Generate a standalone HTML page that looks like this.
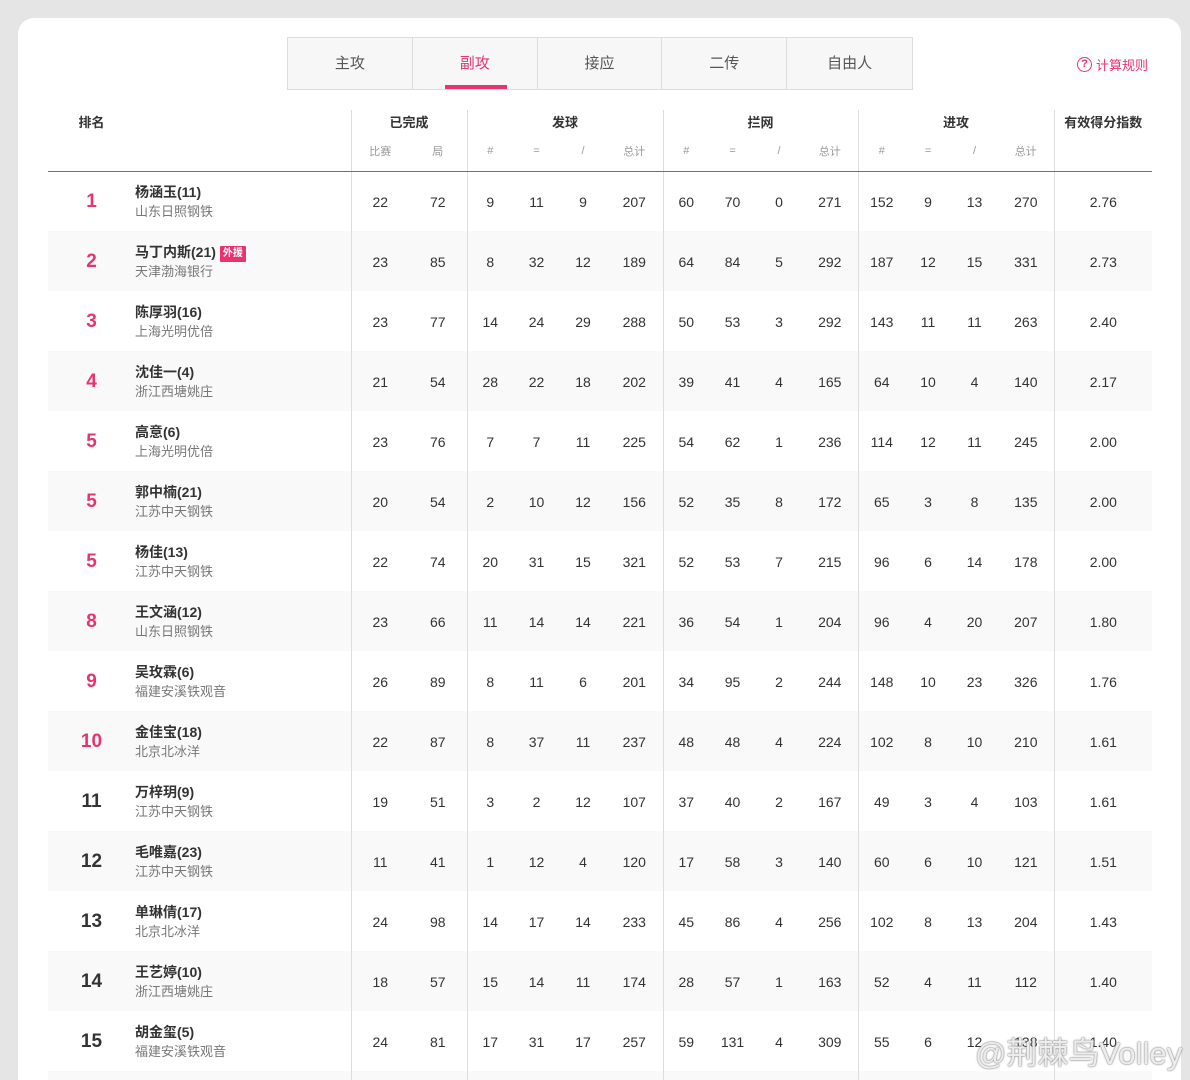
<!DOCTYPE html>
<html><head><meta charset="utf-8">
<style>
*{margin:0;padding:0;box-sizing:border-box}
html,body{width:1190px;height:1080px;overflow:hidden}
body{background:#e5e5e5;font-family:"Liberation Sans","Noto Sans CJK SC",sans-serif;color:#333;position:relative}
.card{position:absolute;left:18px;top:18px;width:1163px;height:1062px;background:#fff;border-radius:16px 16px 0 0}
.tabs{position:absolute;left:287px;top:37px;width:626px;height:53px;border:1px solid #ddd;background:#f7f7f7;display:flex}
.tab{width:125px;height:51px;line-height:52px;text-align:center;font-size:15px;color:#555;border-right:1px solid #ddd;position:relative}
.tab:last-child{border-right:none}
.tab.on{color:#e8336f;background:#f7f7f7}
.tab.on:after{content:"";position:absolute;left:32px;width:62px;bottom:0;height:4px;background:#e8336f}
.rule{position:absolute;left:1077px;top:55px;font-size:13px;color:#e8336f;display:flex;align-items:center}
.rule i{display:inline-block;width:15px;height:15px;border:1.5px solid #e8336f;border-radius:50%;font-style:normal;font-size:11px;line-height:12px;text-align:center;margin-right:4px;font-weight:bold}
table{position:absolute;left:48px;top:110px;border-collapse:collapse;table-layout:fixed;width:1104px}
td,th{text-align:center;font-size:14px;padding:0;white-space:nowrap}
th{font-weight:bold;font-size:13px;color:#333}
tr.g th{height:22px}
tr.s th{height:39px;font-weight:normal;font-size:11px;color:#999;border-bottom:1px solid #e8336f}
.bl{border-left:1px solid #ddd}
tbody tr{height:60px}
tbody td{padding-top:2px}
tbody tr:nth-child(even){background:#f9f9f9}
td.rk{font-size:19px;font-weight:bold;color:#e8336f}
td.rk.d{color:#333}
td.nm{text-align:left}
.n{font-weight:bold;font-size:14px;color:#333;display:block;line-height:20px}
.t{font-size:13px;color:#777;display:block;line-height:20px}
.wy{display:inline-block;background:#e8336f;color:#fff;font-size:10px;padding:0 3px;line-height:16px;margin-left:4px;vertical-align:1px;border-radius:1px}
.wm{position:absolute;left:975px;top:1028px;font-size:31px;color:rgba(255,255,255,.85);text-shadow:0 0 2px #888,0 0 1px #666}
</style></head><body>
<div class="card"></div>
<div class="tabs"><div class="tab">主攻</div><div class="tab on">副攻</div><div class="tab">接应</div><div class="tab">二传</div><div class="tab">自由人</div></div>
<div class="rule"><i>?</i>计算规则</div>
<table>
<colgroup><col style="width:87px"><col style="width:216px"><col style="width:58px"><col style="width:58px"><col style="width:46px"><col style="width:47px"><col style="width:46px"><col style="width:57px"><col style="width:46px"><col style="width:47px"><col style="width:46px"><col style="width:56px"><col style="width:47px"><col style="width:46px"><col style="width:47px"><col style="width:56px"><col style="width:98px"></colgroup>
<thead>
<tr class="g"><th>排名</th><th></th><th colspan="2" class="bl">已完成</th><th colspan="4" class="bl">发球</th><th colspan="4" class="bl">拦网</th><th colspan="4" class="bl">进攻</th><th class="bl">有效得分指数</th></tr>
<tr class="s"><th></th><th></th><th class="bl">比赛</th><th>局</th><th class="bl">#</th><th>=</th><th>/</th><th>总计</th><th class="bl">#</th><th>=</th><th>/</th><th>总计</th><th class="bl">#</th><th>=</th><th>/</th><th>总计</th><th class="bl"></th></tr>
</thead>
<tbody>
<tr><td class="rk">1</td><td class="nm"><span class="n">杨涵玉(11)</span><span class="t">山东日照钢铁</span></td><td class="bl">22</td><td>72</td><td class="bl">9</td><td>11</td><td>9</td><td>207</td><td class="bl">60</td><td>70</td><td>0</td><td>271</td><td class="bl">152</td><td>9</td><td>13</td><td>270</td><td class="bl">2.76</td></tr>
<tr><td class="rk">2</td><td class="nm"><span class="n">马丁内斯(21)<span class="wy">外援</span></span><span class="t">天津渤海银行</span></td><td class="bl">23</td><td>85</td><td class="bl">8</td><td>32</td><td>12</td><td>189</td><td class="bl">64</td><td>84</td><td>5</td><td>292</td><td class="bl">187</td><td>12</td><td>15</td><td>331</td><td class="bl">2.73</td></tr>
<tr><td class="rk">3</td><td class="nm"><span class="n">陈厚羽(16)</span><span class="t">上海光明优倍</span></td><td class="bl">23</td><td>77</td><td class="bl">14</td><td>24</td><td>29</td><td>288</td><td class="bl">50</td><td>53</td><td>3</td><td>292</td><td class="bl">143</td><td>11</td><td>11</td><td>263</td><td class="bl">2.40</td></tr>
<tr><td class="rk">4</td><td class="nm"><span class="n">沈佳一(4)</span><span class="t">浙江西塘姚庄</span></td><td class="bl">21</td><td>54</td><td class="bl">28</td><td>22</td><td>18</td><td>202</td><td class="bl">39</td><td>41</td><td>4</td><td>165</td><td class="bl">64</td><td>10</td><td>4</td><td>140</td><td class="bl">2.17</td></tr>
<tr><td class="rk">5</td><td class="nm"><span class="n">高意(6)</span><span class="t">上海光明优倍</span></td><td class="bl">23</td><td>76</td><td class="bl">7</td><td>7</td><td>11</td><td>225</td><td class="bl">54</td><td>62</td><td>1</td><td>236</td><td class="bl">114</td><td>12</td><td>11</td><td>245</td><td class="bl">2.00</td></tr>
<tr><td class="rk">5</td><td class="nm"><span class="n">郭中楠(21)</span><span class="t">江苏中天钢铁</span></td><td class="bl">20</td><td>54</td><td class="bl">2</td><td>10</td><td>12</td><td>156</td><td class="bl">52</td><td>35</td><td>8</td><td>172</td><td class="bl">65</td><td>3</td><td>8</td><td>135</td><td class="bl">2.00</td></tr>
<tr><td class="rk">5</td><td class="nm"><span class="n">杨佳(13)</span><span class="t">江苏中天钢铁</span></td><td class="bl">22</td><td>74</td><td class="bl">20</td><td>31</td><td>15</td><td>321</td><td class="bl">52</td><td>53</td><td>7</td><td>215</td><td class="bl">96</td><td>6</td><td>14</td><td>178</td><td class="bl">2.00</td></tr>
<tr><td class="rk">8</td><td class="nm"><span class="n">王文涵(12)</span><span class="t">山东日照钢铁</span></td><td class="bl">23</td><td>66</td><td class="bl">11</td><td>14</td><td>14</td><td>221</td><td class="bl">36</td><td>54</td><td>1</td><td>204</td><td class="bl">96</td><td>4</td><td>20</td><td>207</td><td class="bl">1.80</td></tr>
<tr><td class="rk">9</td><td class="nm"><span class="n">吴玫霖(6)</span><span class="t">福建安溪铁观音</span></td><td class="bl">26</td><td>89</td><td class="bl">8</td><td>11</td><td>6</td><td>201</td><td class="bl">34</td><td>95</td><td>2</td><td>244</td><td class="bl">148</td><td>10</td><td>23</td><td>326</td><td class="bl">1.76</td></tr>
<tr><td class="rk">10</td><td class="nm"><span class="n">金佳宝(18)</span><span class="t">北京北冰洋</span></td><td class="bl">22</td><td>87</td><td class="bl">8</td><td>37</td><td>11</td><td>237</td><td class="bl">48</td><td>48</td><td>4</td><td>224</td><td class="bl">102</td><td>8</td><td>10</td><td>210</td><td class="bl">1.61</td></tr>
<tr><td class="rk d">11</td><td class="nm"><span class="n">万梓玥(9)</span><span class="t">江苏中天钢铁</span></td><td class="bl">19</td><td>51</td><td class="bl">3</td><td>2</td><td>12</td><td>107</td><td class="bl">37</td><td>40</td><td>2</td><td>167</td><td class="bl">49</td><td>3</td><td>4</td><td>103</td><td class="bl">1.61</td></tr>
<tr><td class="rk d">12</td><td class="nm"><span class="n">毛唯嘉(23)</span><span class="t">江苏中天钢铁</span></td><td class="bl">11</td><td>41</td><td class="bl">1</td><td>12</td><td>4</td><td>120</td><td class="bl">17</td><td>58</td><td>3</td><td>140</td><td class="bl">60</td><td>6</td><td>10</td><td>121</td><td class="bl">1.51</td></tr>
<tr><td class="rk d">13</td><td class="nm"><span class="n">单琳倩(17)</span><span class="t">北京北冰洋</span></td><td class="bl">24</td><td>98</td><td class="bl">14</td><td>17</td><td>14</td><td>233</td><td class="bl">45</td><td>86</td><td>4</td><td>256</td><td class="bl">102</td><td>8</td><td>13</td><td>204</td><td class="bl">1.43</td></tr>
<tr><td class="rk d">14</td><td class="nm"><span class="n">王艺婷(10)</span><span class="t">浙江西塘姚庄</span></td><td class="bl">18</td><td>57</td><td class="bl">15</td><td>14</td><td>11</td><td>174</td><td class="bl">28</td><td>57</td><td>1</td><td>163</td><td class="bl">52</td><td>4</td><td>11</td><td>112</td><td class="bl">1.40</td></tr>
<tr><td class="rk d">15</td><td class="nm"><span class="n">胡金玺(5)</span><span class="t">福建安溪铁观音</span></td><td class="bl">24</td><td>81</td><td class="bl">17</td><td>31</td><td>17</td><td>257</td><td class="bl">59</td><td>131</td><td>4</td><td>309</td><td class="bl">55</td><td>6</td><td>12</td><td>138</td><td class="bl">1.40</td></tr>
<tr><td class="rk d"></td><td class="nm"></td><td class="bl"></td><td></td><td class="bl"></td><td></td><td></td><td></td><td class="bl"></td><td></td><td></td><td></td><td class="bl"></td><td></td><td></td><td></td><td class="bl"></td></tr>
</tbody>
</table>
<div class="wm">@荆棘鸟Volley</div>
</body></html>
